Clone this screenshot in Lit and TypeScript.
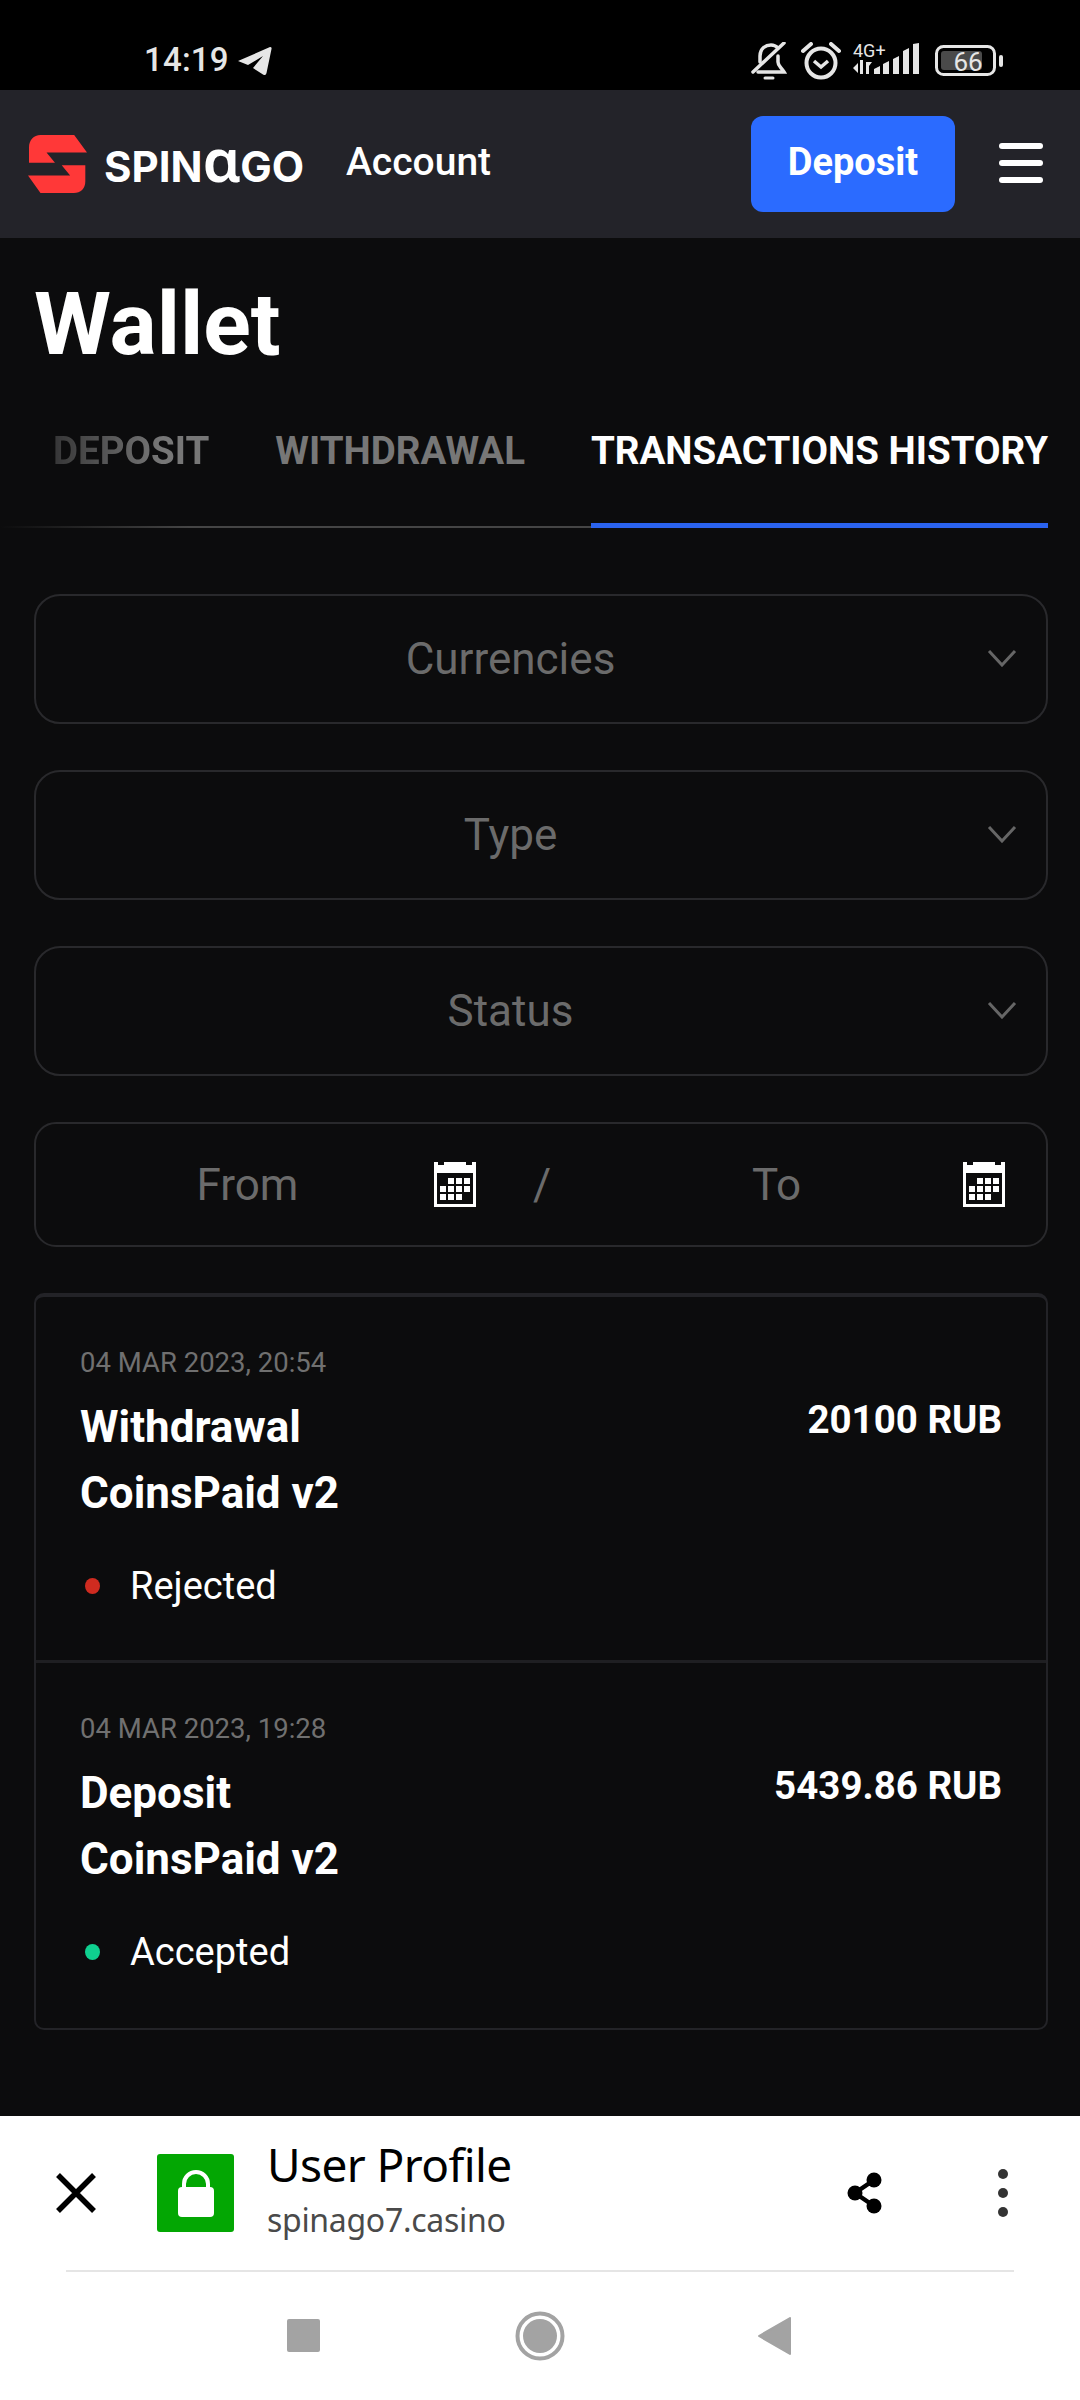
import { LitElement, html, css, svg } from "lit";
import { customElement } from "lit/decorators.js";

const calendar = html`<svg class="cal" width="42" height="45" viewBox="0 0 42 45">
  <path fill="#fff" d="M0 0h4v3h6V0h22v3h6V0h4v45H0z"/>
  <rect x="3" y="11" width="36" height="31" fill="#0c0c0d"/>
  ${[[14,16],[22,16],[30,16],[6,24],[14,24],[22,24],[30,24],[6,32],[14,32],[22,32]].map(
    ([x, y]) => svg`<rect x="${x}" y="${y}" width="6" height="6" fill="#fff"/>`
  )}
</svg>`;

const chevron = html`<svg class="chev" width="30" height="18" viewBox="0 0 30 18"><path d="M2 2l13 14L28 2" fill="none" stroke="#666" stroke-width="3"/></svg>`;

interface Tx { date: string; title: string; amount: string; status: string; color: string }
const txs: Tx[] = [
  { date: "04 MAR 2023, 20:54", title: "Withdrawal", amount: "20100 RUB", status: "Rejected", color: "#cf2b20" },
  { date: "04 MAR 2023, 19:28", title: "Deposit", amount: "5439.86 RUB", status: "Accepted", color: "#0fd08f" },
];

@customElement("app-root")
export class AppRoot extends LitElement {
  static styles = css`
    :host { display: flex; flex-direction: column; width: 1080px; height: 2400px; background: #0c0c0d; font-family: Roboto, "Liberation Sans", sans-serif; color: #fff; overflow: hidden; }
    svg { display: block; flex: none; }
    .status { height: 90px; background: #000; flex: none; display: flex; align-items: flex-start; box-sizing: border-box; padding: 42px 0 0 144px; color: #e6e6e6; }
    .time { font-size: 33px; line-height: 36px; font-weight: 500; letter-spacing: 0.2px; }
    .plane { margin: 5px 0 0 9px; }
    .sysicons { margin-left: auto; margin-right: 77px; display: flex; align-items: flex-start; }
    .alarm { margin-left: 14px; }
    .net { margin-left: 12px; width: 68px; position: relative; height: 36px; }
    .net span { position: absolute; left: 0; top: 1px; font-size: 18px; line-height: 16px; }
    .net svg { position: absolute; left: 0; top: 0; }
    .batt { margin-left: 14px; position: relative; width: 68px; height: 32px; margin-top: 3px; }
    .batt svg { position: absolute; left: 0; top: 0; }
    .batt span { position: absolute; left: 18px; width: 30px; text-align: center; top: 4px; font-size: 26px; line-height: 26px; }
    .header { height: 148px; background: #232329; flex: none; display: flex; align-items: center; padding-left: 28px; box-sizing: border-box; }
    .brand { margin-left: 17px; font-family: Inter, sans-serif; font-weight: 700; font-size: 42px; line-height: 48px; letter-spacing: 0; width: 242px; margin-top: 2px; white-space: nowrap; }
    .brand i { font-style: normal; font-size: 60px; line-height: 40px; font-weight: 600; font-family: "Noto Sans", sans-serif; }
    .account { font-size: 39px; font-weight: 500; margin-top: -5px; }
    .cta { margin-left: auto; width: 204px; height: 96px; background: #2b6bff; border-radius: 12px; display: flex; align-items: center; justify-content: center; font-size: 38px; font-weight: 700; padding-bottom: 4px; box-sizing: border-box; }
    .burger { margin: -2px 37px 0 44px; width: 44px; display: flex; flex-direction: column; gap: 11px; }
    .burger b { height: 6px; background: #fff; border-radius: 3px; }
    .main { flex: 1; padding: 0 32px 0 34px; min-height: 0; }
    h1 { margin: 0; font-size: 88px; line-height: 100px; font-weight: 700; padding-top: 36px; }
    .tabs { display: flex; margin: 52px 0 66px -34px; padding-left: 53px; gap: 66px; height: 102px; box-sizing: border-box; background: linear-gradient(90deg, transparent, #454545 18%) bottom / 100% 2px no-repeat; }
    .tab { font-size: 38.5px; line-height: 50px; font-weight: 700; color: #777; white-space: nowrap; }
    .tab.fade { -webkit-mask-image: linear-gradient(90deg, rgba(0,0,0,.4), #000 70%); mask-image: linear-gradient(90deg, rgba(0,0,0,.4), #000 70%); }
    .tab.on { color: #fff; border-bottom: 5px solid #2b63ee; height: 102px; box-sizing: border-box; }
    .field { margin-top: 46px; height: 130px; box-sizing: border-box; border: 2px solid #29292c; border-radius: 26px; display: flex; align-items: center; padding-right: 29px; font-size: 44px; color: #6b6b6b; }
    .field > span { flex: 1; text-align: center; padding-left: 18px; }
    .field .chev { margin-left: 20px; margin-top: -2px; }
    .dates { height: 125px; padding: 0 41px 0 25px; border-radius: 22px; margin-top: 46px; }
    .part { display: flex; flex: 1; align-items: center; }
    .part span { flex: 1; text-align: center; }
    .field > .slash { flex: none; width: 114px; padding-left: 18px; box-sizing: border-box; }
    .list { margin-top: 46px; border: 2px solid #232327; border-top-width: 4px; border-radius: 10px; }
    .row { padding: 49px 44px 0 44px; height: 363px; box-sizing: border-box; display: flex; justify-content: space-between; }
    .row + .row { border-top: 3px solid #1f1f22; height: 368px; }
    .date { font-size: 27.5px; line-height: 34px; color: #707070; }
    .title { font-size: 44px; line-height: 66px; font-weight: 700; margin-top: 14px; }
    .st { display: flex; align-items: center; font-size: 38px; line-height: 46px; margin-top: 37px; }
    .dot { width: 15px; height: 16px; border-radius: 50%; margin: 0 30px 0 5px; }
    .amount { font-size: 38.5px; line-height: 50px; font-weight: 700; margin-top: 49px; }
    .bar { flex: none; height: 154px; background: #fff; display: flex; align-items: flex-start; color: #000; box-sizing: border-box; padding-left: 56px; }
    .x { margin-top: 57px; }
    .lock { margin: 38px 0 0 61px; width: 77px; height: 78px; background: #03a703; border-radius: 3px; display: flex; align-items: center; justify-content: center; }
    .tt { margin-left: 33px; flex: 1; font-family: "Noto Sans", sans-serif; }
    .tt div:first-child { font-size: 46px; line-height: 60px; margin-top: 18px; letter-spacing: -0.6px; }
    .tt div:last-child { font-size: 32px; line-height: 40px; color: #4a4a4a; margin-top: 6px; letter-spacing: -0.3px; }
    .share { margin: 56px 0 0 0; }
    .more { margin: 53px 55px 0 98px; width: 44px; display: flex; flex-direction: column; align-items: center; gap: 9px; }
    .more b { width: 10px; height: 10px; border-radius: 50%; background: #333; }
    .nav { flex: none; height: 130px; background: #fff; position: relative; }
    .sep { margin: 0 66px; height: 2px; background: #e5e5e5; }
    .navicons { display: flex; align-items: center; height: 128px; padding-left: 287px; }
    .sq { width: 33px; height: 33px; background: #a3a3a3; border-radius: 2px; margin-top: -1px; }
    .home { margin-left: 195px; }
    .back { margin-left: 193px; }
  `;

  render() {
    return html`
      <div class="status">
        <span class="time">14:19</span>
        <svg class="plane" width="34" height="29" viewBox="0 0 34 29"><path fill="#e6e6e6" d="M0 14L32 0Q34 0 33.500 2L28.500 26Q28 29 25 27.500L15 21L25 9L10 18Z"/></svg>
        <div class="sysicons">
          <svg class="bell" width="36" height="38" viewBox="0 0 36 38" fill="none" stroke="#e6e6e6" stroke-width="3.500" stroke-linecap="round"><path d="M2 30L33 1"/><path d="M9 20V14C9 6 15 3 20 3c3 0 5 1 7 3M27 14v6c0 4 3 5 6 10H7"/><path d="M14 36h8" stroke-width="3"/></svg>
          <svg class="alarm" width="40" height="38" viewBox="0 0 40 38" fill="none" stroke="#e6e6e6" stroke-width="4"><circle cx="20" cy="21" r="14.500"/><path d="M13 19l7 6 7-6" stroke-width="3.500"/><path d="M2 9l8-7M38 9l-8-7" stroke-linecap="round"/></svg>
          <div class="net">
            <span>4G+</span>
            <svg width="68" height="36" viewBox="0 0 68 36" fill="#e6e6e6"><path d="M0 26l5-5v10zM7 18h3v14H7zM13 20l3 0v12h-3zM16 20h3l-3 4z"/><path d="M21 32v-5l6-3v8zM30 32V22l6-3v13zM40 32V17l6-3v18zM50 32V9l6-3v26zM60 32V2l6-1v31z"/></svg>
          </div>
          <div class="batt">
            <svg width="68" height="32" viewBox="0 0 68 32"><rect x="1.500" y="1.500" width="58" height="28" rx="7" fill="none" stroke="#e6e6e6" stroke-width="3"/><rect x="6" y="6" width="41" height="19" rx="3" fill="#4a4a4a"/><rect x="64" y="10" width="4" height="12" rx="2" fill="#e6e6e6"/></svg>
            <span>66</span>
          </div>
        </div>
      </div>
      <div class="header">
        <svg width="59" height="58" viewBox="85 88 175 172"><path fill="#ff3838" d="M122 88h100l38 52H140l25 30H88v-45c0-22 14-37 34-37zM85 208h125l-25-30h70v47c0 22-14 35-34 35H122z"/></svg>
        <div class="brand">SPIN<i>ɑ</i>GO</div>
        <div class="account">Account</div>
        <div class="cta">Deposit</div>
        <div class="burger"><b></b><b></b><b></b></div>
      </div>
      <div class="main">
        <h1>Wallet</h1>
        <div class="tabs">
          <div class="tab fade">DEPOSIT</div>
          <div class="tab">WITHDRAWAL</div>
          <div class="tab on">TRANSACTIONS HISTORY</div>
        </div>
        <div class="field"><span>Currencies</span>${chevron}</div>
        <div class="field"><span>Type</span>${chevron}</div>
        <div class="field"><span>Status</span>${chevron}</div>
        <div class="field dates">
          <div class="part"><span>From</span>${calendar}</div>
          <span class="slash">/</span>
          <div class="part"><span>To</span>${calendar}</div>
        </div>
        <div class="list">
          ${txs.map((t) => html`
            <div class="row">
              <div>
                <div class="date">${t.date}</div>
                <div class="title">${t.title}<br />CoinsPaid v2</div>
                <div class="st"><i class="dot" style="background:${t.color}"></i>${t.status}</div>
              </div>
              <div class="amount">${t.amount}</div>
            </div>`)}
        </div>
      </div>
      <div class="bar">
        <svg class="x" width="40" height="40" viewBox="0 0 40 40"><path d="M2 2l36 36M38 2L2 38" stroke="#000" stroke-width="5.500"/></svg>
        <div class="lock"><svg width="38" height="48" viewBox="0 0 38 48"><path fill="none" stroke="#fff" stroke-width="4" d="M7 22V15a12 12 0 0 1 24 0v7"/><rect x="1" y="18" width="36" height="30" rx="4" fill="#fff"/></svg></div>
        <div class="tt"><div>User Profile</div><div>spinago7.casino</div></div>
        <svg class="share" width="36" height="42" viewBox="0 0 36 42"><path d="M27 8L8 21l19 13" fill="none" stroke="#000" stroke-width="4.500"/><circle cx="27" cy="8" r="7.500"/><circle cx="8" cy="21" r="7.500"/><circle cx="27" cy="34" r="7.500"/></svg>
        <div class="more"><b></b><b></b><b></b></div>
      </div>
      <div class="nav">
        <div class="sep"></div>
        <div class="navicons">
          <div class="sq"></div>
          <svg class="home" width="50" height="50" viewBox="0 0 50 50"><circle cx="25" cy="25" r="22.500" fill="none" stroke="#a3a3a3" stroke-width="4"/><circle cx="25" cy="25" r="17" fill="#a3a3a3"/></svg>
          <svg class="back" width="33" height="38" viewBox="0 0 33 38"><path fill="#a3a3a3" stroke="#a3a3a3" stroke-width="2" stroke-linejoin="round" d="M1 19L32 1v36z"/></svg>
        </div>
      </div>
    `;
  }
}
